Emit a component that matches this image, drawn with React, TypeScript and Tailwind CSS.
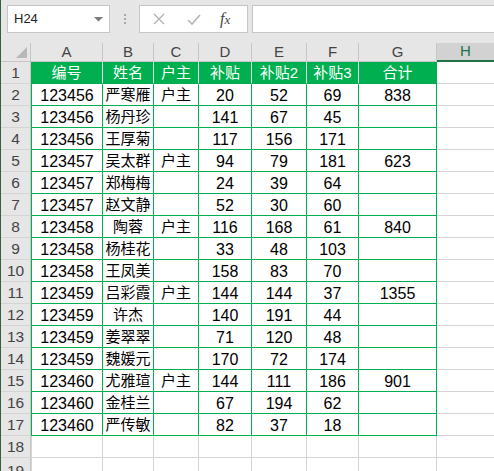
import React from "react";

const rows: string[][] = [
  ["编号", "姓名", "户主", "补贴", "补贴2", "补贴3", "合计"],
  ["123456", "严寒雁", "户主", "20", "52", "69", "838"],
  ["123456", "杨丹珍", "", "141", "67", "45", ""],
  ["123456", "王厚菊", "", "117", "156", "171", ""],
  ["123457", "吴太群", "户主", "94", "79", "181", "623"],
  ["123457", "郑梅梅", "", "24", "39", "64", ""],
  ["123457", "赵文静", "", "52", "30", "60", ""],
  ["123458", "陶蓉", "户主", "116", "168", "61", "840"],
  ["123458", "杨桂花", "", "33", "48", "103", ""],
  ["123458", "王凤美", "", "158", "83", "70", ""],
  ["123459", "吕彩霞", "户主", "144", "144", "37", "1355"],
  ["123459", "许杰", "", "140", "191", "44", ""],
  ["123459", "姜翠翠", "", "71", "120", "48", ""],
  ["123459", "魏媛元", "", "170", "72", "174", ""],
  ["123460", "尤雅瑄", "户主", "144", "111", "186", "901"],
  ["123460", "金桂兰", "", "67", "194", "62", ""],
  ["123460", "严传敏", "", "82", "37", "18", ""],
];

const letters = ["A", "B", "C", "D", "E", "F", "G"];

function isCjk(s: string) {
  return /[\u4e00-\u9fff]/.test(s);
}

export default function App() {
  return (
    <div className="w-[494px] h-[471px] overflow-hidden bg-white border-l border-[#35603f] font-['Liberation_Sans','Noto_Sans_CJK_SC',sans-serif] text-black">
      {/* Formula bar */}
      <div className="flex items-start h-[43px] pt-[5px] pl-[6px] bg-[#e6e6e6]">
        <div className="flex items-center justify-between w-[103px] h-[28px] bg-white border border-[#c6c6c6] pl-[6px] pr-[6px]">
          <span className="text-[13px] text-[#222]">H24</span>
          <svg width="9" height="5" viewBox="0 0 9 5">
            <polygon points="0,0 9,0 4.5,4.5" fill="#7a7a7a" />
          </svg>
        </div>
        <div className="flex flex-col items-center justify-center gap-[2px] w-[29px] h-[28px]">
          <span className="w-[2px] h-[2px] bg-[#a8a8a8]" />
          <span className="w-[2px] h-[2px] bg-[#a8a8a8]" />
          <span className="w-[2px] h-[2px] bg-[#a8a8a8]" />
        </div>
        <div className="flex items-center w-[109px] h-[28px] bg-white border border-[#c6c6c6]">
          <svg className="ml-[13px]" width="12" height="12" viewBox="0 0 12 12">
            <path d="M1 1 L11 11 M11 1 L1 11" stroke="#b4b4b4" strokeWidth="1.4" />
          </svg>
          <svg className="ml-[22px]" width="14" height="11" viewBox="0 0 14 11">
            <path d="M1 6 L5 10 L13 1" stroke="#b4b4b4" strokeWidth="1.6" fill="none" />
          </svg>
          <span className="ml-[19px] text-[16px] leading-none italic text-[#444] font-['Liberation_Serif',serif]">
            f<span className="text-[13px]">x</span>
          </span>
        </div>
        <div className="flex-1 ml-[4px] h-[28px] bg-white border border-r-0 border-[#c6c6c6]" />
      </div>

      {/* Sheet grid */}
      <div className="grid grid-cols-[30px_72px_51px_45px_53px_55px_52px_78px_1fr] grid-rows-[19px_repeat(18,22px)] text-[16px]">
        {/* column header */}
        <div className="relative bg-[#e6e6e6] border-r border-b border-[#c6c6c6]">
          <svg className="absolute right-[3px] bottom-[3px]" width="11" height="11" viewBox="0 0 11 11">
            <polygon points="11,0 11,11 0,11" fill="#b8b8b8" />
          </svg>
        </div>
        {letters.map((l) => (
          <div
            key={l}
            className="flex items-center justify-center bg-[#e6e6e6] border-r border-b border-[#c6c6c6] text-[15px] text-[#444]"
          >
            {l}
          </div>
        ))}
        <div className="flex items-center justify-center bg-[#d2d2d2] border-b-2 border-[#217346] text-[15px] text-[#217346]">
          H
        </div>

        {/* data rows */}
        {rows.map((r, ri) => (
          <React.Fragment key={ri}>
            <div className="flex items-center justify-center pt-[1px] bg-[#e6e6e6] border-r border-b border-r-[#c6c6c6] border-b-[#d4d4d4] text-[15.5px] text-[#444]">
              {ri + 1}
            </div>
            {r.map((v, ci) =>
              ri === 0 ? (
                <div
                  key={ci}
                  className={`flex items-center justify-center pt-[1px] bg-[#00b050] text-white text-[15px] border-b border-b-[#00b050] ${
                    ci === 6 ? "border-r border-r-[#00b050]" : "border-r border-r-[#d8eedf]"
                  }`}
                >
                  {v}
                </div>
              ) : (
                <div
                  key={ci}
                  className={`flex items-center justify-center pt-[2px] border-r border-b border-[#00b050] whitespace-nowrap ${
                    ci === 0 ? "border-l" : ""
                  } ${isCjk(v) ? "text-[15px]" : "text-[16px]"}`}
                >
                  {v}
                </div>
              )
            )}
            <div className="border-b border-[#d4d4d4]" />
          </React.Fragment>
        ))}

        {/* empty rows */}
        {[18, 19].map((n) => (
          <React.Fragment key={n}>
            <div className="flex items-center justify-center pt-[1px] bg-[#e6e6e6] border-r border-b border-r-[#c6c6c6] border-b-[#d4d4d4] text-[15.5px] text-[#444]">
              {n}
            </div>
            {letters.map((l, ci) => (
              <div key={l} className={`border-r border-b border-[#d4d4d4] ${ci === 0 ? "border-l border-l-[#d4d4d4]" : ""}`} />
            ))}
            <div className="border-b border-[#d4d4d4]" />
          </React.Fragment>
        ))}
      </div>
    </div>
  );
}
